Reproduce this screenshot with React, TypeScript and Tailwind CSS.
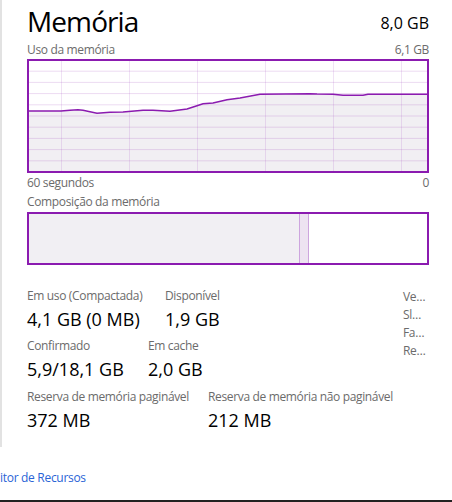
import React from "react";

const pts: [number, number][] = [
  [0, 52], [34, 52], [43, 51.3], [51, 50.7], [56, 51.3], [70, 54.3], [83, 53.3], [96, 53],
  [116, 51.3], [126, 51.3], [143, 52.3], [160, 50], [170, 46.7], [176, 44.7], [186, 44],
  [200, 40.7], [213, 39], [233, 35.3], [283, 34.7], [290, 35], [306, 35.3], [316, 36.3],
  [336, 36.3], [341, 35.3], [402, 35.3],
];

function Graph() {
  const W = 402;
  const H = 114;
  const line = pts.map(([x, y]) => `${x},${y}`).join(" ");
  const fill = `${line} ${W},${H} 0,${H}`;
  const hLines = Array.from({ length: 9 }, (_, i) => 1 + (i + 1) * 11.2);
  const vLines = [34, 102, 170, 238, 306, 374];
  return (
    <svg width={W} height={H} viewBox={`0 0 ${W} ${H}`} className="block">
      <rect x="0" y="0" width={W} height={H} fill="#ffffff" />
      <polygon points={fill} fill="#f1eff3" />
      {hLines.map((y) => (
        <line key={"h" + y} x1="0" x2={W} y1={y} y2={y} stroke="#a04cc0" strokeOpacity="0.2" strokeWidth="1" />
      ))}
      {vLines.map((x) => (
        <line key={"v" + x} x1={x + 0.5} x2={x + 0.5} y1="0" y2={H} stroke="#a04cc0" strokeOpacity="0.16" strokeWidth="1" />
      ))}
      <polyline points={line} fill="none" stroke="#8b1bb0" strokeWidth="1.5" />
      <rect x="1" y="1" width={W - 2} height={H - 2} fill="none" stroke="#8b1bb0" strokeWidth="2" />
    </svg>
  );
}

export default function App() {
  const font = { fontFamily: '"Open Sans", "Noto Sans", sans-serif' };
  const lbl = "text-[12px] leading-[16px] text-[#6b6b6b] tracking-[-0.35px] whitespace-nowrap";
  const val = "mt-[3px] text-[18px] leading-[24px] text-black whitespace-nowrap";
  return (
    <div className="w-[452px] h-[502px] bg-white overflow-hidden flex flex-col" style={font}>
      <div className="h-[447px] border-l-2 border-[#e2e2e2] pl-[25px] pr-[23px] flex flex-col">
        <div className="h-[35px] flex items-end justify-between">
          <div className="text-[28px] leading-[28px] text-black tracking-[-0.9px]">Memória</div>
          <div className="text-[16px] leading-[16px] text-black pb-[4px]">8,0 GB</div>
        </div>
        <div className={"mt-[7px] h-[16px] flex justify-between " + lbl}>
          <span>Uso da memória</span>
          <span>6,1 GB</span>
        </div>
        <div className="mt-[1px]">
          <Graph />
        </div>
        <div className={"h-[18px] pt-[2px] flex justify-between " + lbl}>
          <span>60 segundos</span>
          <span>0</span>
        </div>
        <div className={"mt-[3px] " + lbl}>Composição da memória</div>
        <div className="mt-[2px] h-[53px] border-2 border-[#8b1bb0] flex">
          <div className="w-[270px] bg-[#f1eff3]" />
          <div className="w-[10px] bg-[#ede3f1] border-x border-[#cda5de]" />
          <div className="flex-1 bg-white" />
        </div>
        <div className="mt-[23px] flex">
          <div className="flex-1 flex flex-col">
            <div className="flex">
              <div className="w-[138px]">
                <div className={lbl}>Em uso (Compactada)</div>
                <div className={val}>4,1 GB (0 MB)</div>
              </div>
              <div>
                <div className={lbl}>Disponível</div>
                <div className={val}>1,9 GB</div>
              </div>
            </div>
            <div className="mt-[7px] flex">
              <div className="w-[121px]">
                <div className={lbl}>Confirmado</div>
                <div className={val}>5,9/18,1 GB</div>
              </div>
              <div>
                <div className={lbl}>Em cache</div>
                <div className={val}>2,0 GB</div>
              </div>
            </div>
            <div className="mt-[8px] flex">
              <div className="w-[181px]">
                <div className={lbl}>Reserva de memória paginável</div>
                <div className={val}>372 MB</div>
              </div>
              <div>
                <div className={lbl}>Reserva de memória não paginável</div>
                <div className={val}>212 MB</div>
              </div>
            </div>
          </div>
          <div className="w-[26px] flex flex-col text-[12px] leading-[18px] text-[#6b6b6b] tracking-[-0.35px] whitespace-nowrap">
            <span>Ve…</span>
            <span>Sl…</span>
            <span>Fa…</span>
            <span>Re…</span>
          </div>
        </div>
      </div>
      <div className="flex-1 border-b-2 border-[#222222] pt-[23px]">
        <div className="text-[12px] leading-[16px] text-[#2a64d6] tracking-[-0.3px] whitespace-nowrap">itor de Recursos</div>
      </div>
    </div>
  );
}
